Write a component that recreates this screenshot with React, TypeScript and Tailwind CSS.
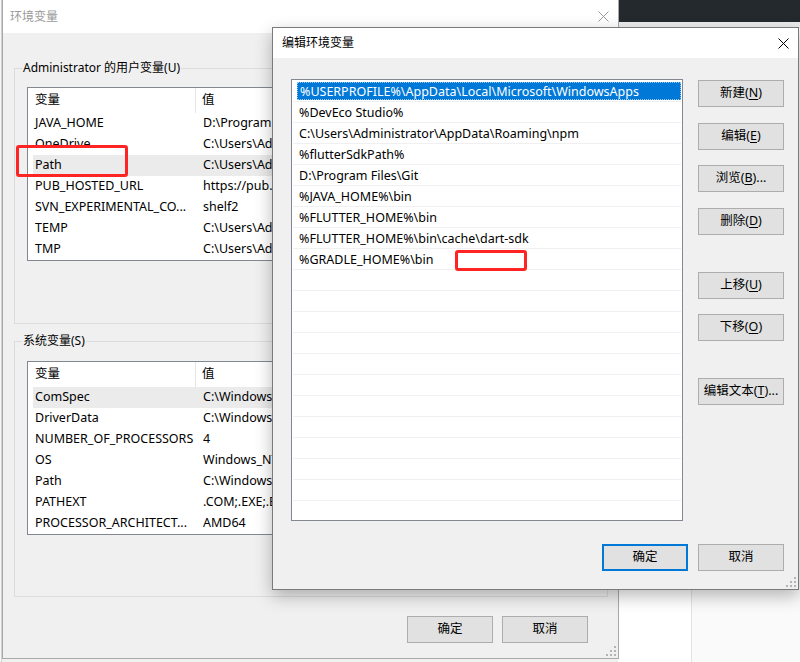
import React from "react";

const uiFont = "font-['Noto_Sans','Noto_Sans_CJK_SC',sans-serif]";

type Row = { name: string; value: string };

const userVars: Row[] = [
  { name: "JAVA_HOME", value: "D:\\Program Files\\Java\\jdk1.8.0_202" },
  { name: "OneDrive", value: "C:\\Users\\Administrator\\OneDrive" },
  { name: "Path", value: "C:\\Users\\Administrator\\AppData\\Local\\Microsoft\\WindowsApps;" },
  { name: "PUB_HOSTED_URL", value: "https://pub.flutter-io.cn" },
  { name: "SVN_EXPERIMENTAL_CO...", value: "shelf2" },
  { name: "TEMP", value: "C:\\Users\\Administrator\\AppData\\Local\\Temp" },
  { name: "TMP", value: "C:\\Users\\Administrator\\AppData\\Local\\Temp" },
];

const systemVars: Row[] = [
  { name: "ComSpec", value: "C:\\Windows\\system32\\cmd.exe" },
  { name: "DriverData", value: "C:\\Windows\\System32\\Drivers\\DriverData" },
  { name: "NUMBER_OF_PROCESSORS", value: "4" },
  { name: "OS", value: "Windows_NT" },
  { name: "Path", value: "C:\\Windows\\system32;C:\\Windows;" },
  { name: "PATHEXT", value: ".COM;.EXE;.BAT;.CMD;.VBS;.VBE;.JS" },
  { name: "PROCESSOR_ARCHITECT...", value: "AMD64" },
];

const pathEntries = [
  "%USERPROFILE%\\AppData\\Local\\Microsoft\\WindowsApps",
  "%DevEco Studio%",
  "C:\\Users\\Administrator\\AppData\\Roaming\\npm",
  "%flutterSdkPath%",
  "D:\\Program Files\\Git",
  "%JAVA_HOME%\\bin",
  "%FLUTTER_HOME%\\bin",
  "%FLUTTER_HOME%\\bin\\cache\\dart-sdk",
  "%GRADLE_HOME%\\bin",
];

function CloseIcon({ color }: { color: string }) {
  return (
    <svg width="11" height="11" viewBox="0 0 11 11">
      <path d="M0.5 0.5L10.5 10.5M10.5 0.5L0.5 10.5" stroke={color} strokeWidth="1" />
    </svg>
  );
}

function Grip() {
  return (
    <svg className="absolute right-[2px] bottom-[2px]" width="10" height="10" viewBox="0 0 10 10">
      {[
        [8, 0],
        [4, 4],
        [8, 4],
        [0, 8],
        [4, 8],
        [8, 8],
      ].map(([x, y]) => (
        <rect key={`${x}-${y}`} x={x} y={y} width="2" height="2" fill="#b4b4b4" />
      ))}
    </svg>
  );
}

function Button({ children, primary }: { children: React.ReactNode; primary?: boolean }) {
  return (
    <div
      className={`w-[86px] h-[27px] flex items-center justify-center bg-[#e1e1e1] text-[12.5px] text-black ${
        primary ? "border-2 border-[#0078d7]" : "border border-[#adadad]"
      }`}
    >
      {children}
    </div>
  );
}

function Key({ k }: { k: string }) {
  return <span className="underline underline-offset-[2px]">{k}</span>;
}

function VarList({ rows, selected }: { rows: Row[]; selected: number }) {
  return (
    <div className="w-[580px] bg-white border border-[#828790] text-[12.5px] text-black">
      <div className="h-[25px] flex">
        <div className="w-[168px] pl-[7px] flex items-center border-r border-[#e5e5e5]">变量</div>
        <div className="pl-[6px] flex items-center">值</div>
      </div>
      {rows.map((r, i) => (
        <div key={r.name} className="h-[21px] pl-[5px] flex">
          <div className={`flex-1 flex items-center ${i === selected ? "bg-[#ebebeb]" : ""}`}>
            <div className="w-[163px] pl-[2px] whitespace-nowrap overflow-hidden">{r.name}</div>
            <div className="w-[80px] ml-[7px] whitespace-nowrap overflow-hidden">{r.value}</div>
          </div>
        </div>
      ))}
    </div>
  );
}

function GroupBox({ title, children, className }: { title: string; children: React.ReactNode; className: string }) {
  return (
    <fieldset className={`h-[264px] border border-[#dcdcdc] ${className}`}>
      <legend className="ml-[7px] px-[1px] text-[12px] leading-[16px] text-black">{title}</legend>
      {children}
    </fieldset>
  );
}

function EnvironmentDialog() {
  return (
    <div className="absolute left-[2px] top-0 w-[617px] h-[659px] bg-[#f0f0f0] border border-t-0 border-[#a8a8a8] flex flex-col">
      <div className="h-[33px] bg-white flex items-center justify-between pl-[7px] pr-[9px]">
        <span className="text-[12px] text-[#9a9a9a]">环境变量</span>
        <CloseIcon color="#9a9a9a" />
      </div>
      <div className="flex flex-col px-[11px]">
        <GroupBox title="Administrator 的用户变量(U)" className="mt-[27px]">
          <div className="ml-[12px] mt-[11px]">
            <VarList rows={userVars} selected={2} />
          </div>
        </GroupBox>
        <GroupBox title="系统变量(S)" className="mt-[9px]">
          <div className="ml-[12px] mt-[12px]">
            <VarList rows={systemVars} selected={0} />
          </div>
        </GroupBox>
      </div>
      <div className="flex justify-end gap-[9px] pr-[30px] mt-[19px]">
        <Button>确定</Button>
        <Button>取消</Button>
      </div>
      <Grip />
    </div>
  );
}

function EditDialog() {
  const empty = Array.from({ length: 12 });
  return (
    <div className="absolute left-[272px] top-[27px] w-[527px] h-[563px] bg-[#f0f0f0] border border-[#7a7a7a] shadow-[0_6px_16px_rgba(0,0,0,0.28)] flex flex-col">
      <div className="h-[30px] bg-white flex items-center justify-between pl-[9px] pr-[9px] shrink-0">
        <span className="text-[12px] text-black">编辑环境变量</span>
        <CloseIcon color="#000" />
      </div>
      <div className="flex flex-1 pl-[18px] pt-[21px]">
        <div className="relative w-[392px] h-[442px] pt-[1px] bg-white border border-[#828790] overflow-hidden text-[12.5px] text-black">
          {pathEntries.map((p, i) => (
            <div key={p} className="h-[21px] mx-[1px] border-b border-[#f0f0f0] flex">
              <div
                className={`flex-1 ml-[4px] my-[1px] pl-[2px] pt-[2px] flex items-center whitespace-nowrap ${
                  i === 0 ? "bg-[#0078d7] text-white border border-dotted border-[#9cc8f0]" : ""
                }`}
              >
                {p}
              </div>
            </div>
          ))}
          {empty.map((_, i) => (
            <div key={i} className="h-[21px] mx-[1px] border-b border-[#f0f0f0]" />
          ))}
          <div className="absolute left-[163px] top-[170px] w-[72px] h-[21px] border-[3px] border-[#ff2424] rounded-[3px]" />
        </div>
        <div className="ml-[15px] pt-[1px] flex flex-col">
          <Button>
            新建(<Key k="N" />)
          </Button>
          <div className="mt-[16px]">
            <Button>
              编辑(<Key k="E" />)
            </Button>
          </div>
          <div className="mt-[15px]">
            <Button>
              浏览(<Key k="B" />)...
            </Button>
          </div>
          <div className="mt-[16px]">
            <Button>
              删除(<Key k="D" />)
            </Button>
          </div>
          <div className="mt-[37px]">
            <Button>
              上移(<Key k="U" />)
            </Button>
          </div>
          <div className="mt-[15px]">
            <Button>
              下移(<Key k="O" />)
            </Button>
          </div>
          <div className="mt-[37px]">
            <Button>
              编辑文本(<Key k="T" />)...
            </Button>
          </div>
        </div>
      </div>
      <div className="flex justify-end gap-[10px] pr-[14px] pb-[18px] shrink-0">
        <Button primary>确定</Button>
        <Button>取消</Button>
      </div>
      <Grip />
    </div>
  );
}

export default function App() {
  return (
    <div className={`relative w-[800px] h-[662px] overflow-hidden bg-[#f0f0f0] ${uiFont}`}>
      {/* app window behind the dialogs */}
      <div className="absolute left-[618px] top-0 w-[182px] h-[662px] bg-white flex flex-col">
        <div className="h-[22px] bg-[#24292e]" />
        <div className="h-[6px] bg-[#ececec]" />
        <div className="flex-1 flex">
          <div className="w-[74px] border-r border-[#e3e3e3]" />
          <div className="flex-1 bg-[#fafafa]" />
        </div>
      </div>
      <div className="absolute left-0 top-0 w-[2px] h-[662px] border-r border-[#d0d0d0] bg-[#f7f7f7]" />
      <EnvironmentDialog />
      {/* marks the Path row of the user variables */}
      <div className="absolute left-[16px] top-[145px] w-[112px] h-[32px] border-[3px] border-[#ff2424] rounded-[3px]" />
      <EditDialog />
    </div>
  );
}
